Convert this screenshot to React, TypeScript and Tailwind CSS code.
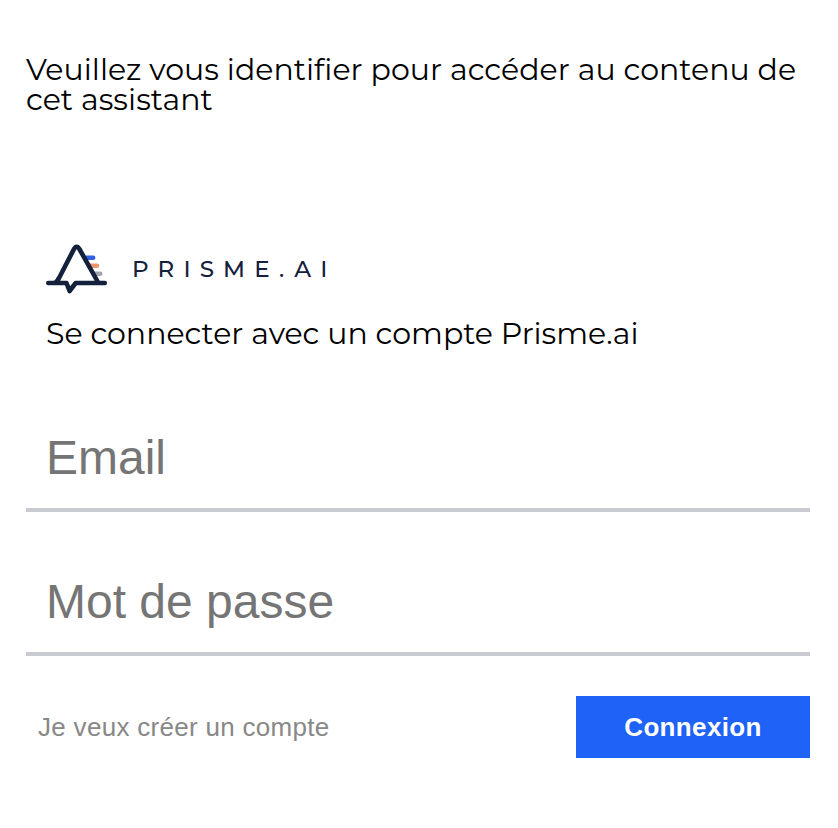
function PrismeMark() {
  return (
    <svg className="h-[50px] w-[62px] shrink-0" viewBox="0 0 62 50" fill="none" strokeLinecap="round" strokeLinejoin="round" aria-hidden="true">
      <path d="M40 13.8H47.2" stroke="#315fe8" strokeWidth="4.4" />
      <path d="M44 21.8H51" stroke="#ef946b" strokeWidth="4.4" />
      <path d="M48 29.8H54.3" stroke="#a3a5ac" strokeWidth="4.4" />
      <path d="M11.5 38L28.1 5Q30.7 .5 33.3 5L52 38Z" fill="white" />
      <path d="M2.3 39H20.5L23.6 47L29.7 39H58.8M11.5 37L28 5Q30.7 .4 33.4 5L51.3 37" stroke="#14213d" strokeWidth="4.6" />
      <path d="M6 37.5Q9 37 11 33L14 38.5ZM49 33Q52 37 56 38H49Z" fill="#14213d" />
    </svg>
  );
}

export default function App() {
  return (
    <main className="flex h-[828px] w-[838px] flex-col overflow-hidden bg-white pr-[28px] pl-[26px] pt-[55px] font-['Liberation_Sans',Arial,sans-serif] text-black">
      <h1 className="font-['Montserrat','Open_Sans',sans-serif] text-[30px] leading-[30px] tracking-[0.04px] whitespace-nowrap">
        Veuillez vous identifier pour accéder au contenu de
        <br />
        cet assistant
      </h1>
      <div className="mt-[129px] flex h-[50px] items-center pl-5 font-['Montserrat','Open_Sans',sans-serif] font-medium text-[#14213d]">
        <PrismeMark />
        <span className="ml-[24px] text-[23px] leading-[30px] tracking-[9.15px]">PRISME.AI</span>
      </div>
      <p className="mt-[25px] pl-5 font-['Montserrat','Open_Sans',sans-serif] text-[30px] leading-[30px] whitespace-nowrap">
        Se connecter avec un compte Prisme.ai
      </p>
      <form className="mt-[63px] flex flex-col">
        <input type="email" placeholder="Email" aria-label="Email" className="h-[100px] w-full border-b-4 border-[#c9cbd0] px-5 pb-[5px] text-[48px] outline-none placeholder:text-[#757575]" />
        <input type="password" placeholder="Mot de passe" aria-label="Mot de passe" className="mt-[44px] h-[100px] w-full border-b-4 border-[#c9cbd0] px-5 pb-[5px] text-[48px] outline-none placeholder:text-[#757575]" />
        <div className="mt-[40px] flex items-center justify-between pl-3">
          <button type="button" className="text-[26px] leading-[30px] tracking-[0.3px] text-[#888888]">Je veux créer un compte</button>
          <button type="button" className="h-[62px] w-[234px] bg-[#1f62f8] text-[26px] font-bold tracking-[0.35px] text-white">Connexion</button>
        </div>
      </form>
    </main>
  );
}
